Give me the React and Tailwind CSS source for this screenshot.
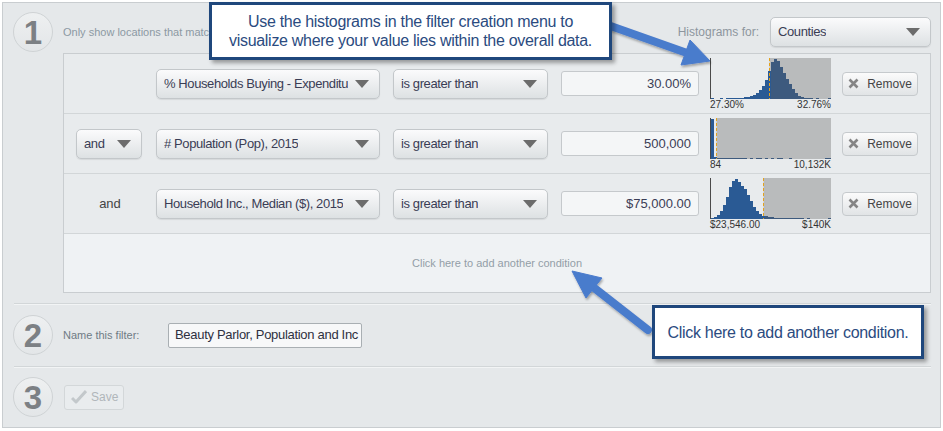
import React from "react";

const FONT = "font-['Liberation_Sans',Arial,sans-serif]";

// histogram bins, 40 bins of 3px each, heights out of 40
const histograms = [
  {
    bins: [1, 0, 0, 1, 0, 1, 1, 1, 1, 1, 1, 2, 2, 3, 4, 6, 9, 13, 19, 28, 37, 40, 38, 32, 26, 20, 15, 10, 6, 3, 2, 1, 1, 1, 0, 1, 0, 0, 0, 1],
    threshold: 59.5,
    min: "27.30%",
    max: "32.76%",
  },
  {
    bins: [40, 2, 1, 1, 1, 1, 1, 1, 1, 1, 1, 1, 0, 1, 0, 1, 1, 0, 1, 0, 1, 0, 1, 1, 0, 0, 1, 0, 0, 0, 0, 0, 0, 0, 0, 0, 0, 0, 1, 1],
    threshold: 6.5,
    min: "84",
    max: "10,132K",
  },
  {
    bins: [1, 2, 4, 8, 14, 22, 32, 38, 40, 37, 33, 30, 24, 18, 12, 8, 5, 3, 3, 2, 2, 1, 1, 1, 1, 1, 1, 1, 1, 1, 1, 0, 1, 0, 0, 0, 0, 0, 0, 1],
    threshold: 53.5,
    min: "$23,546.00",
    max: "$140K",
  },
];

const conditions = [
  { join: null, field: "% Households Buying - Expenditu", value: "30.00%" },
  { join: "select", field: "# Population (Pop), 2015", value: "500,000" },
  { join: "text", field: "Household Inc., Median ($), 2015", value: "$75,000.00" },
];

function Caret() {
  return (
    <svg width="14" height="8" viewBox="0 0 14 8" className="shrink-0">
      <polygon points="0,0 14,0 7,8" fill="#6c6c6c" />
    </svg>
  );
}

function Select({ label, className = "" }) {
  return (
    <div
      className={`flex items-center justify-between gap-[4px] h-[30px] rounded-[5px] border border-[#c3c7ca] bg-linear-to-b from-[#fbfbfc] to-[#dde1e3] shadow-[0_1px_1px_rgba(0,0,0,0.08)] pl-[7px] pr-[10px] text-[13px] tracking-[-0.4px] text-[#3a3d55] ${className}`}
    >
      <span className="overflow-hidden whitespace-nowrap">{label}</span>
      <Caret />
    </div>
  );
}

function Step({ n }) {
  return (
    <div className="w-[40px] h-[40px] rounded-full border border-[#cfd3d5] bg-linear-to-b from-[#eef0f1] to-[#e3e6e8] flex items-center justify-center text-[33px] leading-none font-bold text-[#7c8084]">
      {n}
    </div>
  );
}

function Histogram({ bins, threshold, min, max }) {
  return (
    <div className="w-[121px] shrink-0">
      <svg width="121" height="41" viewBox="0 0 121 41" className="block">
        <rect x={threshold} y="0" width={121 - threshold} height="41" fill="#b9bbbc" />
        {bins.map((h, i) => {
          const x = 1 + i * 3;
          return (
            <rect
              key={i}
              x={x}
              y={41 - h}
              width="3"
              height={h}
              fill={x + 1.5 > threshold ? "#3d5a7e" : "#2a5a94"}
            />
          );
        })}
        <line x1={threshold} y1="0" x2={threshold} y2="41" stroke="#e3a21f" strokeWidth="1" strokeDasharray="3 2" />
        <line x1="0.5" y1="0" x2="0.5" y2="41" stroke="#4a4a4a" strokeWidth="1" />
      </svg>
      <div className="flex justify-between text-[10px] leading-[11px] text-[#333]">
        <span>{min}</span>
        <span>{max}</span>
      </div>
    </div>
  );
}

function RemoveButton() {
  return (
    <button className="flex items-center justify-center gap-[8px] w-[76px] h-[24px] shrink-0 rounded-[4px] border border-[#c6cacd] bg-linear-to-b from-[#fbfbfb] to-[#e1e4e6] text-[12px] text-[#444]">
      <svg width="11" height="11" viewBox="0 0 11 11">
        <path d="M1.5 1.5 L9.5 9.5 M9.5 1.5 L1.5 9.5" stroke="#858585" strokeWidth="2.6" />
      </svg>
      Remove
    </button>
  );
}

function ConditionRow({ cond, hist }) {
  return (
    <div className="flex items-center h-[60px] border-b border-[#d2d6d8] bg-[#e8ebed]">
      {/* join column */}
      <div className="w-[92px] shrink-0 flex items-center">
        {cond.join === "select" && <Select label="and" className="ml-[12px] w-[66px]" />}
        {cond.join === "text" && (
          <span className="w-full text-center text-[13px] text-[#444]">and</span>
        )}
      </div>
      <Select label={cond.field} className="w-[224px] shrink-0" />
      <Select label="is greater than" className="w-[155px] shrink-0 ml-[13px]" />
      <div className="ml-[13px] w-[138px] h-[25px] shrink-0 rounded-[3px] border border-[#c5c9cc] bg-[#f4f6f7] flex items-center justify-end pr-[7px] text-[13px] text-[#3a3d55]">
        {cond.value}
      </div>
      <div className="ml-[11px]">
        <Histogram {...hist} />
      </div>
      <div className="ml-[11px]">
        <RemoveButton />
      </div>
    </div>
  );
}

function Separator() {
  return (
    <div className="ml-[11px] mr-[9px]">
      <div className="h-px bg-[#d2d6d8]" />
      <div className="h-px bg-[#f2f4f5]" />
    </div>
  );
}

function Arrows() {
  return (
    <svg
      width="943"
      height="431"
      viewBox="0 0 943 431"
      className="absolute top-0 left-0 pointer-events-none"
    >
      <defs>
        <filter id="arrowShadow" x="-20%" y="-20%" width="140%" height="140%">
          <feDropShadow dx="1" dy="2" stdDeviation="1.2" floodColor="#000" floodOpacity="0.3" />
        </filter>
      </defs>
      <g fill="#4a7bcc" stroke="#4a7bcc" filter="url(#arrowShadow)">
        <line x1="605" y1="24" x2="687" y2="53" strokeWidth="8" strokeLinecap="round" />
        <polygon points="710,61 681,65 690,40" strokeWidth="1" strokeLinejoin="round" />
        <line x1="648" y1="330" x2="593" y2="287" strokeWidth="8" strokeLinecap="round" />
        <polygon points="572,271 602,278 586,298" strokeWidth="1" strokeLinejoin="round" />
      </g>
    </svg>
  );
}

function Callout({ className, children }) {
  return (
    <div
      className={`absolute flex items-center justify-center text-center bg-white border-[3px] border-[#1f477c] shadow-[3px_3px_4px_rgba(0,0,0,0.35)] text-[16px] leading-[19px] tracking-[-0.3px] text-[#2b4b80] ${className}`}
    >
      {children}
    </div>
  );
}

export default function App() {
  return (
    <div className={`relative w-[943px] h-[431px] bg-white p-[2px] overflow-hidden ${FONT}`}>
      <div className="w-[939px] h-[426px] border border-[#c9cdd0] bg-[#e5e8ea]">
        {/* Step 1: conditions */}
        <div className="flex pb-[10px]">
          <div className="w-[60px] shrink-0 pl-[10px] pt-[9px]">
            <Step n="1" />
          </div>
          <div className="flex-1 pt-[14px] pr-[9px]">
            <div className="flex items-center justify-between h-[30px]">
              {/* the callout covers the rest of this line */}
              <span className="w-[146px] overflow-hidden whitespace-nowrap text-[11px] text-[#8c99a3]">
                Only show locations that matc
              </span>
              <div className="flex items-center">
                <span className="text-[12px] text-[#8d969e] mr-[11px]">Histograms for:</span>
                <Select label="Counties" className="w-[161px]" />
              </div>
            </div>
            <div className="mt-[6px] border border-[#c9cdd0]">
              {conditions.map((cond, i) => (
                <ConditionRow key={i} cond={cond} hist={histograms[i]} />
              ))}
              <div className="h-[58px] bg-[#eff2f4] flex items-center justify-center text-[11px] text-[#939ea7]">
                Click here to add another condition
              </div>
            </div>
          </div>
        </div>

        <Separator />

        {/* Step 2: name */}
        <div className="flex pt-[10px] pb-[11px]">
          <div className="w-[60px] shrink-0 pl-[10px]">
            <Step n="2" />
          </div>
          <div className="flex items-center h-[40px]">
            <span className="w-[105px] text-[11px] text-[#6f7b85]">Name this filter:</span>
            <div className="w-[194px] h-[25px] rounded-[2px] border border-[#a9afb3] bg-[#f7f8f9] pl-[6px] flex items-center overflow-hidden whitespace-nowrap text-[13px] tracking-[-0.3px] text-[#2e3040]">
              Beauty Parlor, Population and Inc
            </div>
          </div>
        </div>

        <Separator />

        {/* Step 3: save */}
        <div className="flex pt-[9px]">
          <div className="w-[60px] shrink-0 pl-[10px]">
            <Step n="3" />
          </div>
          <div className="flex items-center h-[40px] pl-[1px]">
            <button className="flex items-center gap-[4px] w-[60px] h-[25px] pl-[6px] rounded-[3px] border border-[#d3d7d9] bg-[#e9ecee] text-[12px] text-[#b0b6ba]">
              <svg width="16" height="14" viewBox="0 0 16 14">
                <path d="M1 8 L5 12 L15 1" fill="none" stroke="#c3c8cb" strokeWidth="3" strokeLinejoin="round" />
              </svg>
              Save
            </button>
          </div>
        </div>
      </div>

      <Arrows />

      <Callout className="left-[209px] top-[2px] w-[403px] h-[58px]">
        Use the histograms in the filter creation menu to
        <br />
        visualize where your value lies within the overall data.
      </Callout>
      <Callout className="left-[652px] top-[305px] w-[272px] h-[54px]">
        Click here to add another condition.
      </Callout>
    </div>
  );
}
